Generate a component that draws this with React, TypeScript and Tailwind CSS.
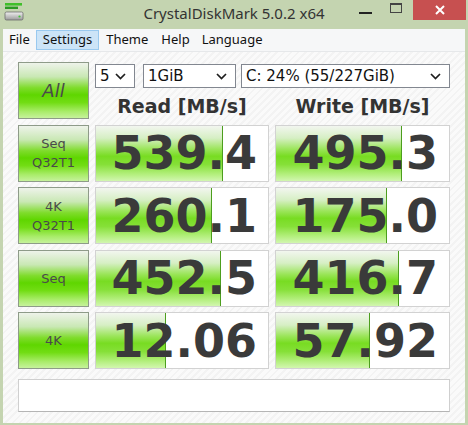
import React from "react";

const Chevron = () => (
  <svg width="11" height="7" viewBox="0 0 11 7" className="shrink-0">
    <path d="M1 1 L5.5 5.5 L10 1" fill="none" stroke="#1e1e1e" strokeWidth="1.7" />
  </svg>
);

const Select = ({ text, w }: { text: string; w: string }) => (
  <div className={`${w} h-[24px] bg-white border border-[#828790] flex items-center justify-between pl-[4px] pr-[8px] text-[15px] text-[#111] font-['DejaVu_Sans',sans-serif]`}>
    <span className="leading-none">{text}</span>
    <Chevron />
  </div>
);

const LabelBtn = ({ lines, big }: { lines: string[]; big?: boolean }) => (
  <div className="w-[71px] h-[57px] border border-[#8e9b89] bg-[linear-gradient(180deg,#eef3ea_0%,#c9e8b4_25%,#7fdc2c_45%,#5fd600_58%,#72dd14_72%,#a8ec68_88%,#c6f29c_100%)] flex flex-col items-center justify-center text-[#4a4a4a] font-['DejaVu_Sans',sans-serif]">
    {lines.map((l) => (
      <span key={l} className={big ? "text-[18px] leading-[20px] italic" : "text-[13px] leading-[19px]"}>
        {l}
      </span>
    ))}
  </div>
);

const Cell = ({ value, bar }: { value: string; bar: number }) => (
  <div className="relative h-[57px] bg-white border border-[#d2d2d2] flex items-center justify-end pr-[11px] overflow-hidden">
    <div
      className="absolute left-0 top-0 bottom-0 border-r border-[#4c9e1e] bg-[linear-gradient(180deg,#f2f6ef_0%,#d6efc4_22%,#9be55a_42%,#78dc22_55%,#86e038_70%,#b4ef7e_88%,#d2f6b0_100%)]"
      style={{ width: bar }}
    />
    <span className="relative text-[46px] font-bold leading-none text-[#3a3a3a] font-['DejaVu_Sans',sans-serif] tracking-[0px]">
      {value}
    </span>
  </div>
);

const rows = [
  { label: ["Seq", "Q32T1"], r: "539.4", rb: 127, w: "495.3", wb: 126 },
  { label: ["4K", "Q32T1"], r: "260.1", rb: 116, w: "175.0", wb: 111 },
  { label: ["Seq"], r: "452.5", rb: 125, w: "416.7", wb: 123 },
  { label: ["4K"], r: "12.06", rb: 70, w: "57.92", wb: 94 },
];

export default function App() {
  return (
    <div className="w-[468px] h-[425px] bg-[#c4d4b0] flex flex-col overflow-hidden">
      {/* Title bar */}
      <div className="relative h-[29px] shrink-0 flex items-center">
        <svg width="20" height="20" viewBox="0 0 20 20" className="absolute left-[4px] top-[2px]">
          <rect x="1" y="1" width="17" height="2.6" fill="#3fbf2a" />
          <rect x="1" y="4.6" width="13" height="2.4" fill="#2a9a22" />
          <rect x="1" y="10" width="18" height="8" rx="1.5" fill="url(#dg)" stroke="#6c6c6c" strokeWidth="0.8" />
          <circle cx="15.5" cy="14.5" r="1.1" fill="#43c23a" />
          <defs>
            <linearGradient id="dg" x1="0" y1="0" x2="0" y2="1">
              <stop offset="0" stopColor="#f0f0f0" />
              <stop offset="1" stopColor="#9a9a9a" />
            </linearGradient>
          </defs>
        </svg>
        <div className="w-full text-center text-[15px] text-[#333] font-['Noto_Sans',sans-serif] leading-none -mt-[2px]">
          CrystalDiskMark 5.0.2 x64
        </div>
        <div className="absolute left-[359px] top-[12px] w-[13px] h-[2px] bg-[#222]" />
        <div className="absolute left-[390px] top-[3px] w-[12px] h-[10px] border border-[#444] border-t-2" />
        <div className="absolute left-[413px] top-0 w-[53px] h-[20px] bg-[#c75050] flex items-center justify-center">
          <svg width="10" height="10" viewBox="0 0 10 10">
            <path d="M1 1 L9 9 M9 1 L1 9" stroke="#fff" strokeWidth="2" />
          </svg>
        </div>
      </div>

      {/* Menu bar */}
      <div className="mx-[3px] h-[23px] shrink-0 bg-[#f6f7f8] border-b border-[#e6e8ea] flex items-stretch pl-[0px] font-['Noto_Sans',sans-serif] text-[13px] text-[#111]">
        <div className="px-[6px] flex items-center">File</div>
        <div className="px-[6px] my-[1px] flex items-center bg-[#cce4f7] border border-[#99c9ef]">Settings</div>
        <div className="px-[7px] flex items-center">Theme</div>
        <div className="px-[6px] flex items-center">Help</div>
        <div className="px-[6px] flex items-center">Language</div>
      </div>

      {/* Body */}
      <div className="mx-[3px] mb-[2px] flex-1 bg-[repeating-linear-gradient(135deg,#fafafa_0px,#fafafa_3px,#f3f3f3_3px,#f3f3f3_5px)] pl-[15px] pt-[10px]">
        <div className="grid grid-cols-[71px_174px_175px] gap-x-[6px] gap-y-[5.5px]">
          <LabelBtn lines={["All"]} big />
          <div className="col-span-2 flex flex-col">
            <div className="flex mt-[2px]">
              <Select text="5" w="w-[40px]" />
              <div className="ml-[8px]">
                <Select text="1GiB" w="w-[93px]" />
              </div>
              <div className="ml-[5px]">
                <Select text="C: 24% (55/227GiB)" w="w-[209px]" />
              </div>
            </div>
            <div className="grid grid-cols-[174px_175px] gap-x-[6px] flex-1 items-center">
              <div className="text-center font-bold text-[19px] text-[#333] font-['DejaVu_Sans',sans-serif] leading-none pt-[5px]">
                Read [MB/s]
              </div>
              <div className="text-center font-bold text-[19px] text-[#333] font-['DejaVu_Sans',sans-serif] leading-none pt-[5px]">
                Write [MB/s]
              </div>
            </div>
          </div>
          {rows.map((row) => (
            <React.Fragment key={row.r}>
              <LabelBtn lines={row.label} />
              <Cell value={row.r} bar={row.rb} />
              <Cell value={row.w} bar={row.wb} />
            </React.Fragment>
          ))}
        </div>
        <div className="mt-[10px] w-[432px] h-[33px] bg-white border border-[#cfcfcf] border-b-[#b5b5b5]" />
      </div>
    </div>
  );
}
